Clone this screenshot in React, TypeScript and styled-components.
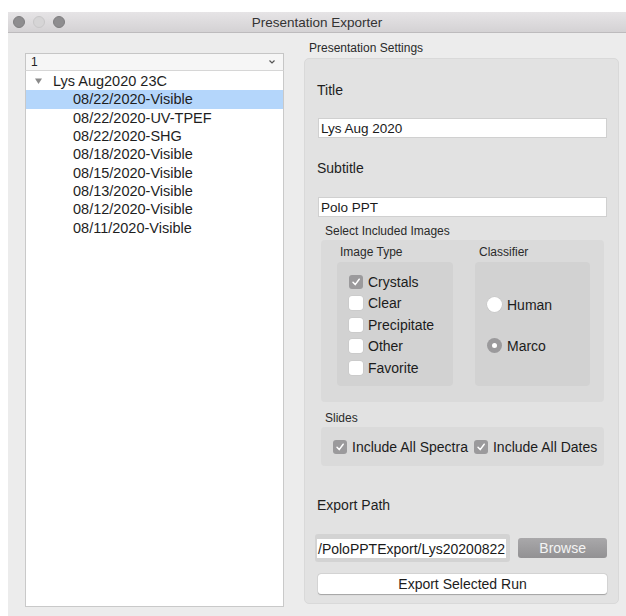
import React from "react";
import styled, { createGlobalStyle } from "styled-components";

const Global = createGlobalStyle`
  html, body { margin: 0; padding: 0; background: #ffffff; }
  body { padding: 12px 0 0 8px; font-family: "Liberation Sans", Arial, sans-serif; color: #222; }
`;

const Window = styled.div`
  width: 618px;
  height: 604px;
  background: #ececec;
  display: flex;
  flex-direction: column;
  overflow: hidden;
`;

const TitleBar = styled.div`
  height: 20px;
  flex: none;
  display: flex;
  align-items: center;
  position: relative;
  background: linear-gradient(#e6e4e6, #d4d2d4);
  border-bottom: 1px solid #bdbbbd;
`;

const Lights = styled.div`
  display: flex;
  gap: 8px;
  padding-left: 5px;
`;

const Light = styled.span<{ $dim?: boolean }>`
  width: 12px;
  height: 12px;
  border-radius: 50%;
  background: ${(p) => (p.$dim ? "#d6d5d6" : "#8e8d8f")};
  border: 0.5px solid ${(p) => (p.$dim ? "#c8c7c8" : "#7f7e80")};
  box-sizing: border-box;
`;

const WindowTitle = styled.div`
  position: absolute;
  left: 0;
  right: 0;
  text-align: center;
  font-size: 13.5px;
  color: #333333;
  pointer-events: none;
`;

const Body = styled.div`
  flex: 1;
  display: flex;
  min-height: 0;
`;

const LeftColumn = styled.div`
  width: 259px;
  margin: 20px 0 9px 17px;
  display: flex;
  flex-direction: column;
`;

const Combo = styled.div`
  height: 17px;
  flex: none;
  box-sizing: border-box;
  border: 1px solid #c6c6c6;
  border-bottom: none;
  background: #f6f6f6;
  display: flex;
  align-items: center;
  justify-content: space-between;
  padding: 0 7px 0 5px;
  font-size: 12px;
  color: #222;
`;

const TreeBox = styled.div`
  flex: 1;
  background: #ffffff;
  border: 1px solid #c9c9c9;
  border-top: 1px solid #d6d6d6;
  padding-top: 1px;
`;

const TreeRow = styled.div<{ $selected?: boolean; $indent: number }>`
  height: 18.3px;
  display: flex;
  align-items: center;
  padding-left: ${(p) => p.$indent}px;
  background: ${(p) => (p.$selected ? "#b4d6fb" : "transparent")};
  font-size: 14.5px;
  color: #1e1e1e;
`;

const Disclosure = styled.span`
  width: 19px;
  display: inline-flex;
  align-items: center;
`;

const RightColumn = styled.div`
  width: 315px;
  margin: 8px 0 12px 20px;
  display: flex;
  flex-direction: column;
`;

const SmallLabel = styled.div<{ $indent?: number; $top?: number }>`
  font-size: 12px;
  line-height: 14px;
  color: #2a2a2a;
  padding-left: ${(p) => p.$indent ?? 0}px;
  margin-top: ${(p) => p.$top ?? 0}px;
`;

const Group = styled.div`
  flex: 1;
  margin-top: 3px;
  background: #e2e2e2;
  border: 1px solid #d9d9d9;
  border-radius: 5px;
  box-sizing: border-box;
  display: flex;
  flex-direction: column;
  padding: 13px 11px 0 12px;
`;

const FieldLabel = styled.div<{ $top: number }>`
  font-size: 14px;
  line-height: 18px;
  margin-top: ${(p) => p.$top}px;
  color: #1e1e1e;
`;

const TextInput = styled.div<{ $top: number }>`
  height: 20px;
  margin: ${(p) => p.$top}px 0 0 1px;
  background: #ffffff;
  border: 1px solid #d0d0d0;
  box-sizing: border-box;
  display: flex;
  align-items: center;
  padding-left: 2px;
  font-size: 13.5px;
  color: #1a1a1a;
`;

const SubGroup = styled.div<{ $height: number }>`
  height: ${(p) => p.$height}px;
  margin: 2px 3px 0 4px;
  background: #dadada;
  border-radius: 4px;
  box-sizing: border-box;
`;

const ImagesGrid = styled.div`
  display: grid;
  grid-template-columns: 116px 115px;
  column-gap: 22px;
  padding: 5px 0 0 16px;
`;

const Column = styled.div`
  display: flex;
  flex-direction: column;
`;

const Inset = styled.div`
  margin-top: 3px;
  height: 124px;
  background: #d2d2d2;
  border-radius: 4px;
  box-sizing: border-box;
  display: flex;
  flex-direction: column;
`;

const CheckList = styled(Inset)`
  padding: 9px 0 0 12px;
`;

const RadioList = styled(Inset)`
  padding: 32px 0 0 12px;
  gap: 19.5px;
`;

const OptionRow = styled.label`
  height: 21.5px;
  display: flex;
  align-items: center;
  gap: 5px;
  font-size: 14px;
  color: #1c1c1c;
  white-space: nowrap;
`;

const Box = styled.span<{ $on?: boolean }>`
  width: 14px;
  height: 14px;
  flex: none;
  border-radius: 3px;
  box-sizing: border-box;
  display: inline-flex;
  align-items: center;
  justify-content: center;
  background: ${(p) => (p.$on ? "#9b9a9c" : "#ffffff")};
  box-shadow: ${(p) => (p.$on ? "none" : "0 0 0 0.5px #c4c4c4")};
`;

const Radio = styled.span<{ $on?: boolean }>`
  width: 15px;
  height: 15px;
  flex: none;
  border-radius: 50%;
  display: inline-flex;
  align-items: center;
  justify-content: center;
  background: ${(p) => (p.$on ? "#9b9a9c" : "#ffffff")};
  box-shadow: ${(p) => (p.$on ? "none" : "0 0 0 0.5px #c4c4c4")};
`;

const Dot = styled.span`
  width: 5px;
  height: 5px;
  border-radius: 50%;
  background: #ffffff;
`;

const SlidesRow = styled.div`
  display: flex;
  align-items: center;
  gap: 6px;
  height: 100%;
  padding-left: 12px;
`;

const PathRow = styled.div`
  display: flex;
  align-items: center;
  margin-top: 20px;
  gap: 8px;
`;

const PathFrame = styled.div`
  width: 196px;
  height: 28px;
  margin-left: -2px;
  background: #d3d3d3;
  border-radius: 3px;
  box-sizing: border-box;
  padding: 5px 4px 4px 2px;
  display: flex;
`;

const PathField = styled.div`
  flex: 1;
  background: #ffffff;
  overflow: hidden;
  display: flex;
  align-items: center;
  font-size: 14px;
  white-space: nowrap;
  padding-left: 1px;
  color: #1a1a1a;
`;

const BrowseButton = styled.button`
  width: 89px;
  height: 20px;
  border: none;
  border-radius: 3px;
  background: linear-gradient(#a9a8aa, #929193);
  color: #f4f4f4;
  font-family: inherit;
  font-size: 14px;
  padding: 0;
`;

const WideButton = styled.button`
  height: 20px;
  margin: 12px 0 0 1px;
  border: none;
  border-radius: 3px;
  background: #ffffff;
  box-shadow: 0 0.5px 1px rgba(0, 0, 0, 0.25), 0 0 0 0.5px #cfcfcf;
  font-family: inherit;
  font-size: 14px;
  color: #1c1c1c;
  padding: 0;
`;

const Tick = () => (
  <svg width="10" height="10" viewBox="0 0 10 10">
    <path d="M2 5.3 L4.2 7.6 L8.2 2.2" fill="none" stroke="#ffffff" strokeWidth="1.5" strokeLinecap="round" strokeLinejoin="round" />
  </svg>
);

const Check = ({ on, label }: { on?: boolean; label: string }) => (
  <OptionRow>
    <Box $on={on}>{on && <Tick />}</Box>
    {label}
  </OptionRow>
);

const RadioOption = ({ on, label }: { on?: boolean; label: string }) => (
  <OptionRow>
    <Radio $on={on}>{on && <Dot />}</Radio>
    {label}
  </OptionRow>
);

const runs = [
  "08/22/2020-Visible",
  "08/22/2020-UV-TPEF",
  "08/22/2020-SHG",
  "08/18/2020-Visible",
  "08/15/2020-Visible",
  "08/13/2020-Visible",
  "08/12/2020-Visible",
  "08/11/2020-Visible",
];

export default function App() {
  return (
    <>
      <Global />
      <Window>
        <TitleBar>
          <Lights>
            <Light />
            <Light $dim />
            <Light />
          </Lights>
          <WindowTitle>Presentation Exporter</WindowTitle>
        </TitleBar>
        <Body>
          <LeftColumn>
            <Combo>
              <span>1</span>
              <svg width="8" height="6" viewBox="0 0 8 6">
                <path d="M1.5 1.5 L4 4 L6.5 1.5" fill="none" stroke="#555" strokeWidth="1.2" />
              </svg>
            </Combo>
            <TreeBox>
              <TreeRow $indent={8}>
                <Disclosure>
                  <svg width="9" height="8" viewBox="0 0 9 8">
                    <path d="M1 1.5 L8 1.5 L4.5 7 Z" fill="#8a8a8a" />
                  </svg>
                </Disclosure>
                Lys Aug2020 23C
              </TreeRow>
              {runs.map((r, i) => (
                <TreeRow key={r} $indent={47} $selected={i === 0}>
                  {r}
                </TreeRow>
              ))}
            </TreeBox>
          </LeftColumn>
          <RightColumn>
            <SmallLabel $indent={5}>Presentation Settings</SmallLabel>
            <Group>
              <FieldLabel $top={9}>Title</FieldLabel>
              <TextInput $top={19}>Lys Aug 2020</TextInput>
              <FieldLabel $top={21}>Subtitle</FieldLabel>
              <TextInput $top={20}>Polo PPT</TextInput>
              <SmallLabel $indent={8} $top={7}>Select Included Images</SmallLabel>
              <SubGroup $height={162}>
                <ImagesGrid>
                  <Column>
                    <SmallLabel $indent={3}>Image Type</SmallLabel>
                    <CheckList>
                      <Check on label="Crystals" />
                      <Check label="Clear" />
                      <Check label="Precipitate" />
                      <Check label="Other" />
                      <Check label="Favorite" />
                    </CheckList>
                  </Column>
                  <Column>
                    <SmallLabel $indent={4}>Classifier</SmallLabel>
                    <RadioList>
                      <RadioOption label="Human" />
                      <RadioOption on label="Marco" />
                    </RadioList>
                  </Column>
                </ImagesGrid>
              </SubGroup>
              <SmallLabel $indent={8} $top={9}>Slides</SmallLabel>
              <SubGroup $height={39}>
                <SlidesRow>
                  <Check on label="Include All Spectra" />
                  <Check on label="Include All Dates" />
                </SlidesRow>
              </SubGroup>
              <FieldLabel $top={30}>Export Path</FieldLabel>
              <PathRow>
                <PathFrame>
                  <PathField>/PoloPPTExport/Lys20200822</PathField>
                </PathFrame>
                <BrowseButton>Browse</BrowseButton>
              </PathRow>
              <WideButton>Export Selected Run</WideButton>
            </Group>
          </RightColumn>
        </Body>
      </Window>
    </>
  );
}
